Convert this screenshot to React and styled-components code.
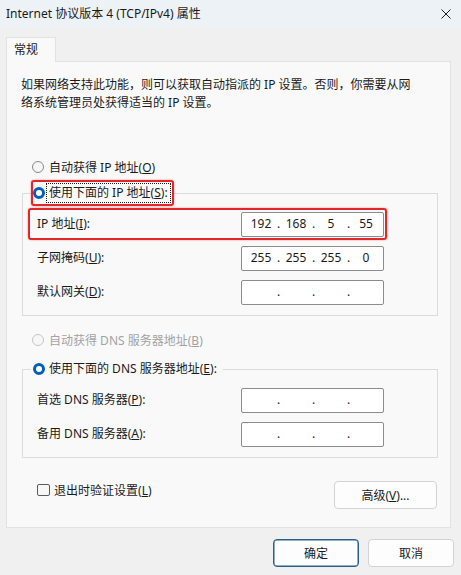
import React from "react";
import styled, { createGlobalStyle, css } from "styled-components";

const GlobalStyle = createGlobalStyle`
  html, body {
    margin: 0;
    padding: 0;
    background: #f0f0f0;
  }
  body {
    font-family: "Noto Sans", "Noto Sans CJK SC", sans-serif;
    font-size: 12px;
    color: #1b1b1b;
  }
`;

const Window = styled.div`
  width: 461px;
  height: 575px;
  display: flex;
  flex-direction: column;
  background: #f0f0f0;
  overflow: hidden;
`;

const TitleBar = styled.div`
  height: 27px;
  flex: none;
  display: flex;
  align-items: center;
  justify-content: space-between;
  padding: 0 10px 0 6px;
  background: #edf2f7;
  box-sizing: border-box;
`;

const Title = styled.span`
  font-size: 12px;
  line-height: 16px;
  color: #1a1a1a;
`;

const Body = styled.div`
  padding: 10px 0 0 6px;
  display: flex;
  flex-direction: column;
`;

const Tab = styled.div`
  width: 50px;
  height: 25px;
  box-sizing: border-box;
  border: 1px solid #e2e2e2;
  border-bottom: none;
  background: #f9f9f9;
  margin-bottom: -1px;
  position: relative;
  z-index: 1;
  padding: 3px 0 0 7px;
  line-height: 18px;
`;

const Panel = styled.div`
  width: 445px;
  height: 467px;
  box-sizing: border-box;
  border: 1px solid #e2e2e2;
  background: #f9f9f9;
  display: flex;
  flex-direction: column;
`;

const Description = styled.p`
  margin: 14px 0 0 14px;
  line-height: 18px;
  white-space: nowrap;
`;

const RadioRow = styled.label`
  display: flex;
  align-items: center;
  height: 20px;
  margin-top: ${(p) => p.$top}px;
  padding-left: 25px;
  gap: 5px;
  color: ${(p) => (p.$disabled ? "#a3a3a3" : "#1b1b1b")};
`;

const RadioDot = styled.span`
  width: 12px;
  height: 12px;
  box-sizing: border-box;
  border-radius: 50%;
  flex: none;
  ${(p) =>
    p.$checked
      ? css`
          background: #005fb8;
          border: 3.5px solid #005fb8;
          box-shadow: inset 0 0 0 5px #ffffff;
          background: #ffffff;
        `
      : css`
          background: #f7f7f7;
          border: 1px solid ${p.$disabled ? "#c6c6c6" : "#8a8a8a"};
        `}
`;

const Group = styled.fieldset`
  margin: ${(p) => p.$top}px 0 0 15px;
  width: 416px;
  box-sizing: border-box;
  min-width: 0;
  border: 1px solid #dcdcdc;
  padding: 2px 0 7px 5px;
  display: flex;
  flex-direction: column;
  gap: 2px;
`;

const Legend = styled.legend`
  padding: 0;
  margin-left: 3px;
`;

const LegendBox = styled.span`
  display: flex;
  align-items: center;
  height: 26px;
  box-sizing: border-box;
  border: 2px solid ${(p) => (p.$highlight ? "#e3262a" : "transparent")};
  border-radius: 3px;
  padding-right: 2px;
  gap: 2px;
  ${(p) => p.$highlight && "box-shadow: 0 0 2px rgba(227, 38, 42, 0.5);"}
`;

const FocusText = styled.span`
  padding: 1px 2px;
  line-height: 16px;
  outline: ${(p) => (p.$focused ? "1px dotted #1b1b1b" : "none")};
`;

const FieldRow = styled.div`
  width: 359px;
  height: 32px;
  box-sizing: border-box;
  border: 2px solid ${(p) => (p.$highlight ? "#e3262a" : "transparent")};
  border-radius: 3px;
  ${(p) => p.$highlight && "box-shadow: 0 0 2px rgba(227, 38, 42, 0.5);"}
  display: flex;
  align-items: center;
  justify-content: space-between;
  padding: 0 1px 0 7px;
`;

const FieldLabel = styled.span`
  line-height: 16px;
`;

const IpBox = styled.div`
  width: 143px;
  height: 25px;
  box-sizing: border-box;
  border: 1px solid #8c8c8c;
  border-radius: 2px;
  background: #ffffff;
  display: grid;
  grid-template-columns: 30px 5px 30px 5px 30px 5px 30px;
  align-items: center;
  padding: 0 3px 0 4px;
  text-align: center;
  line-height: 16px;
`;

const Octet = styled.span`
  color: #1b1b1b;
`;

const Dot = styled.span`
  color: #1b1b1b;
`;

const BottomRow = styled.div`
  margin-top: 22px;
  display: flex;
  justify-content: space-between;
  align-items: flex-start;
  padding: 0 13px 0 30px;
`;

const CheckLabel = styled.label`
  display: flex;
  align-items: center;
  height: 20px;
  gap: 4px;
`;

const CheckBox = styled.span`
  width: 13px;
  height: 12px;
  box-sizing: border-box;
  border: 1px solid #5c5c5c;
  border-radius: 2px;
  background: #f7f7f7;
`;

const Button = styled.button`
  width: ${(p) => p.$width}px;
  height: 28px;
  margin-top: ${(p) => p.$top || 0}px;
  box-sizing: border-box;
  font-family: inherit;
  font-size: 12px;
  color: #1b1b1b;
  background: #fdfdfd;
  border: 1px solid ${(p) => (p.$primary ? "#27608c" : "#d3d3d3")};
  ${(p) => p.$primary && "box-shadow: inset 0 0 0 0.5px #27608c;"}
  border-radius: 4px;
  padding: 0;
`;

const Footer = styled.div`
  margin-top: 11px;
  display: flex;
  justify-content: flex-end;
  gap: 9px;
  padding-right: 7px;
`;

const Acc = ({ k }) => (
  <>
    (<u>{k}</u>)
  </>
);

function IpField({ value }) {
  const parts = value ? value.split(".") : ["", "", "", ""];
  const cells = [];
  parts.forEach((p, i) => {
    cells.push(<Octet key={"o" + i}>{p}</Octet>);
    if (i < 3) cells.push(<Dot key={"d" + i}>.</Dot>);
  });
  return <IpBox>{cells}</IpBox>;
}

function GroupLegend({ highlight, focused, children }) {
  return (
    <Legend>
      <LegendBox $highlight={highlight}>
        <RadioDot $checked />
        <FocusText $focused={focused}>{children}</FocusText>
      </LegendBox>
    </Legend>
  );
}

export default function App() {
  return (
    <Window>
      <GlobalStyle />
      <TitleBar>
        <Title>Internet 协议版本 4 (TCP/IPv4) 属性</Title>
        <svg width="10" height="10" viewBox="0 0 10 10">
          <path d="M0.5 0.5 L9.5 9.5 M9.5 0.5 L0.5 9.5" stroke="#1b1b1b" strokeWidth="1" />
        </svg>
      </TitleBar>
      <Body>
        <Tab>常规</Tab>
        <Panel>
          <Description>
            如果网络支持此功能，则可以获取自动指派的 IP 设置。否则，你需要从网
            <br />
            络系统管理员处获得适当的 IP 设置。
          </Description>

          <RadioRow $top={45}>
            <RadioDot />
            <span>
              自动获得 IP 地址<Acc k="O" />
            </span>
          </RadioRow>

          <Group $top={3}>
            <GroupLegend highlight focused>
              使用下面的 IP 地址<Acc k="S" />:
            </GroupLegend>
            <FieldRow $highlight>
              <FieldLabel>
                IP 地址<Acc k="I" />:
              </FieldLabel>
              <IpField value="192.168.5.55" />
            </FieldRow>
            <FieldRow>
              <FieldLabel>
                子网掩码<Acc k="U" />:
              </FieldLabel>
              <IpField value="255.255.255.0" />
            </FieldRow>
            <FieldRow>
              <FieldLabel>
                默认网关<Acc k="D" />:
              </FieldLabel>
              <IpField />
            </FieldRow>
          </Group>

          <RadioRow $top={14} $disabled>
            <RadioDot $disabled />
            <span>
              自动获得 DNS 服务器地址<Acc k="B" />
            </span>
          </RadioRow>

          <Group $top={6}>
            <GroupLegend>
              使用下面的 DNS 服务器地址<Acc k="E" />:
            </GroupLegend>
            <FieldRow>
              <FieldLabel>
                首选 DNS 服务器<Acc k="P" />:
              </FieldLabel>
              <IpField />
            </FieldRow>
            <FieldRow>
              <FieldLabel>
                备用 DNS 服务器<Acc k="A" />:
              </FieldLabel>
              <IpField />
            </FieldRow>
          </Group>

          <BottomRow>
            <CheckLabel>
              <CheckBox />
              <span>
                退出时验证设置<Acc k="L" />
              </span>
            </CheckLabel>
            <Button $width={103} $top={1}>
              高级<Acc k="V" />...
            </Button>
          </BottomRow>
        </Panel>
        <Footer>
          <Button $width={86} $primary>
            确定
          </Button>
          <Button $width={86}>取消</Button>
        </Footer>
      </Body>
    </Window>
  );
}
